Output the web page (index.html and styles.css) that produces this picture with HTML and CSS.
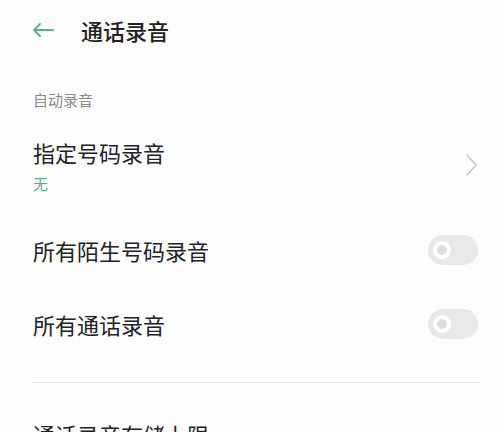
FILE: index.html
```html
<!DOCTYPE html>
<html>
  <head>
    <meta charset="utf-8">
    <link rel="stylesheet" href="styles.css">
  </head>

  <body>
    <div class="header">
      <svg class="back" width="22" height="14" viewBox="0 0 22 14">
        <path d="M21 7H2M8 1L2 7l6 6" fill="none" stroke="#4fb58f" stroke-width="1.8" stroke-linecap="round" stroke-linejoin="round" />
      </svg>
      <h1>通话录音</h1>
    </div>

    <div class="section-label">自动录音</div>

    <div class="row row-first">
      <div class="row-text">
        <div class="row-title">指定号码录音</div>
        <div class="row-sub">无</div>
      </div>
      <svg class="chevron" width="11" height="22" viewBox="0 0 11 22">
        <path d="M1 1l9 10-9 10" fill="none" stroke="#c2c2c2" stroke-width="1.3" stroke-linecap="round" stroke-linejoin="round" />
      </svg>
    </div>

    <div class="row">
      <div class="row-title">所有陌生号码录音</div>
      <div class="toggle"><span class="knob"></span></div>
    </div>

    <div class="row">
      <div class="row-title">所有通话录音</div>
      <div class="toggle"><span class="knob"></span></div>
    </div>

    <div class="divider"></div>

    <div class="row-title last">通话录音存储上限</div>
  </body>
</html>
```

FILE: styles.css
```css
body {
  font-family: "Noto Sans CJK SC", "Noto Sans", sans-serif;
  background-color: #fdfdfd;
  color: #222;
  margin: 0;
  padding: 0 22px 0 33px;
  overflow: hidden;
}

.header {
  display: flex;
  align-items: center;
  height: 60px;
}

.back {
  margin-left: -1px;
  margin-right: 27px;
}

h1 {
  margin: 0;
  font-size: 22px;
  font-weight: 500;
  line-height: 30px;
}

.section-label {
  padding-top: 30px;
  font-size: 15px;
  line-height: 20px;
  color: #8a8a8a;
}

.row {
  display: flex;
  align-items: center;
  justify-content: space-between;
  height: 74px;
}

.row-first {
  height: auto;
  padding: 27px 0 19px;
}

.row-title {
  font-size: 22px;
  line-height: 30px;
  color: #222;
}

.row-sub {
  margin-top: 7px;
  font-size: 15px;
  line-height: 20px;
  color: #4fb58f;
}

.chevron {
  margin-right: 1px;
  margin-top: -2px;
}

.toggle {
  display: flex;
  align-items: center;
  width: 50px;
  height: 30px;
  padding-left: 5px;
  box-sizing: border-box;
  border-radius: 15px;
  background-color: #e9e9e9;
}

.knob {
  width: 18px;
  height: 18px;
  box-sizing: border-box;
  border: 4px solid #fff;
  border-radius: 50%;
  background-color: #dedede;
}

.divider {
  margin-top: 21px;
  margin-right: -2px;
  height: 1px;
  background-color: #e6e6e6;
}

.row-title.last {
  margin-top: 36px;
}
```
